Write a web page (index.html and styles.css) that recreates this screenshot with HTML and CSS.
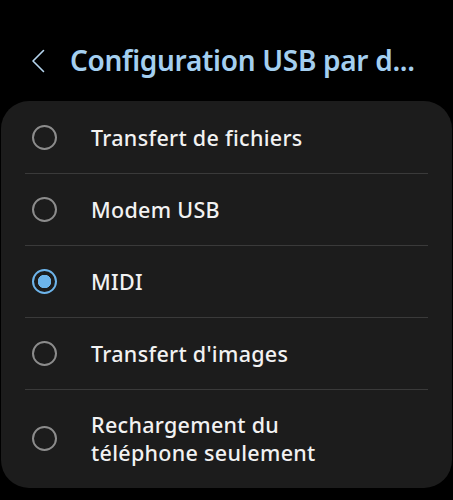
FILE: index.html
```html
<!DOCTYPE html>
<html lang="fr">
<head>
<meta charset="utf-8">
<link rel="stylesheet" href="styles.css">
</head>
<body>
<header class="header">
  <svg class="back" width="14" height="24" viewBox="0 0 14 24" aria-hidden="true"><path d="M12.5 1.5 L2 12 L12.5 22.5" fill="none" stroke="#b5d5ee" stroke-width="1.6" stroke-linecap="round" stroke-linejoin="round"/></svg>
  <h1 class="title">Configuration USB par d...</h1>
</header>
<main class="card">
  <div class="row"><span class="radio"></span><span class="label">Transfert de fichiers</span></div>
  <div class="row"><span class="radio"></span><span class="label">Modem USB</span></div>
  <div class="row"><span class="radio checked"></span><span class="label">MIDI</span></div>
  <div class="row"><span class="radio"></span><span class="label">Transfert d'images</span></div>
  <div class="row tall"><span class="radio"></span><span class="label">Rechargement du<br>téléphone seulement</span></div>
</main>
</body>
</html>
```
FILE: styles.css
```css
html, body {
  margin: 0;
  padding: 0;
  background: #000;
}
body {
  width: 453px;
  height: 500px;
  overflow: hidden;
  font-family: "Noto Sans", "Open Sans", sans-serif;
}
.header {
  height: 101px;
  display: flex;
  align-items: flex-start;
  padding-left: 31px;
  box-sizing: border-box;
}
.back {
  margin-top: 49px;
  flex: none;
}
.title {
  margin: 0 0 0 25px;
  padding-top: 41px;
  font-size: 28px;
  font-weight: 600;
  color: #a4cff0;
  line-height: 38px;
  white-space: nowrap;
  letter-spacing: -0.3px;
}
.card {
  display: block;
  margin-left: 1px;
  width: 451px;
  height: 387px;
  background: #1c1c1c;
  border-radius: 28px;
  overflow: hidden;
}
.row {
  margin: 0 24px;
  height: 72px;
  box-sizing: border-box;
  display: flex;
  align-items: center;
  padding-left: 7px;
  border-top: 1px solid #3a3a3a;
}
.row:first-child {
  border-top: none;
}
.row.tall {
  height: 98px;
}
.radio {
  flex: none;
  width: 25px;
  height: 25px;
  box-sizing: border-box;
  border-radius: 50%;
  border: 2px solid #8c8c8c;
  margin-right: 34px;
}
.radio.checked {
  border-color: #6db4ea;
  background: radial-gradient(circle, #6db4ea 0 6.5px, transparent 7px);
}
.label {
  color: #f2f2f2;
  font-size: 21.5px;
  font-weight: 500;
  line-height: 28px;
  letter-spacing: 0.3px;
  margin-top: 1px;
}
```
